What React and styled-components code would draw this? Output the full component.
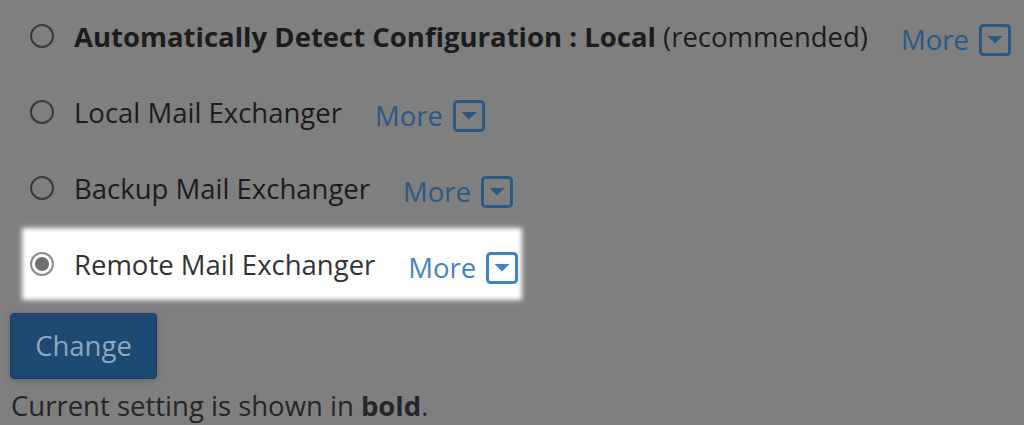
import React from "react";
import styled, { createGlobalStyle } from "styled-components";

const Global = createGlobalStyle`
  html, body { margin: 0; padding: 0; }
  body {
    background: #7f7f7f;
    font-family: "Open Sans", "Noto Sans", sans-serif;
    width: 1024px;
    height: 425px;
    overflow: hidden;
  }
`;

const Page = styled.div`
  display: flex;
  flex-direction: column;
  padding: 0 0 0 10px;
`;

const List = styled.div`
  display: flex;
  flex-direction: column;
  margin-top: -2px;
  padding-left: 20px;
`;

const Slot = styled.div`
  height: 76px;
  display: flex;
  align-items: center;
`;

const Row = styled.div`
  display: flex;
  align-items: center;
  font-size: 27.5px;
  color: ${(p) => (p.$hl ? "#333333" : "#1c1c1c")};
  ${(p) =>
    p.$hl &&
    `
    background: #ffffff;
    box-shadow: 0 0 5px 4px #ffffff;
    margin-left: -4px;
    padding: 0 0 0 4px;
    height: 64px;
  `}
`;

const Radio = styled.span`
  flex: none;
  width: 24px;
  height: 24px;
  box-sizing: border-box;
  border-radius: 50%;
  border: 2px solid ${(p) => (p.$checked ? "#8a8a8a" : "#3a3a3a")};
  background: ${(p) => (p.$checked ? "#ffffff" : "transparent")};
  display: flex;
  align-items: center;
  justify-content: center;
  &::after {
    content: "";
    display: ${(p) => (p.$checked ? "block" : "none")};
    width: 14px;
    height: 14px;
    border-radius: 50%;
    background: #707070;
  }
`;

const Label = styled.span`
  margin-left: 20px;
  white-space: nowrap;
`;

const Strong = styled.b`
  font-weight: 700;
`;

const More = styled.span`
  display: flex;
  align-items: center;
  margin-left: 33px;
  padding-top: 7px;
  color: ${(p) => (p.$hl ? "#3f84c4" : "#2b5983")};
  white-space: nowrap;
`;

const Toggle = styled.svg`
  margin-left: 10px;
  width: 32px;
  height: 32px;
  flex: none;
`;

const Button = styled.button`
  align-self: flex-start;
  margin-top: 11px;
  width: 147px;
  height: 66px;
  background: #1c4a72;
  color: #90a7bf;
  border: 1px solid #173e60;
  border-radius: 4px;
  font-family: inherit;
  font-size: 27.5px;
  box-shadow: 0 2px 6px rgba(0, 0, 0, 0.18);
  padding: 0 0 2px 0;
`;

const Note = styled.p`
  margin: 9px 0 0 1px;
  font-size: 27.5px;
  line-height: 36px;
  color: #262626;
`;

const Caret = ({ hl }) => {
  const c = hl ? "#3f84c4" : "#2b5983";
  return (
    <Toggle viewBox="0 0 32 32">
      <rect x="1.5" y="1.5" width="29" height="29" rx="3" fill="none" stroke={c} strokeWidth="3" />
      <polygon points="8.5,12 23.5,12 16,19.5" fill={c} />
    </Toggle>
  );
};

const options = [
  { key: "auto", bold: "Automatically Detect Configuration : Local", extra: " (recommended)" },
  { key: "local", label: "Local Mail Exchanger" },
  { key: "backup", label: "Backup Mail Exchanger" },
  { key: "remote", label: "Remote Mail Exchanger", checked: true },
];

export default function App() {
  return (
    <>
      <Global />
      <Page>
        <List>
          {options.map((o) => (
            <Slot key={o.key}>
              <Row $hl={o.checked}>
                <Radio $checked={o.checked} />
                <Label>
                  {o.bold ? <Strong>{o.bold}</Strong> : o.label}
                  {o.extra}
                </Label>
                <More $hl={o.checked}>
                  More
                  <Caret hl={o.checked} />
                </More>
              </Row>
            </Slot>
          ))}
        </List>
        <Button>Change</Button>
        <Note>
          Current setting is shown in <Strong>bold</Strong>.
        </Note>
      </Page>
    </>
  );
}
